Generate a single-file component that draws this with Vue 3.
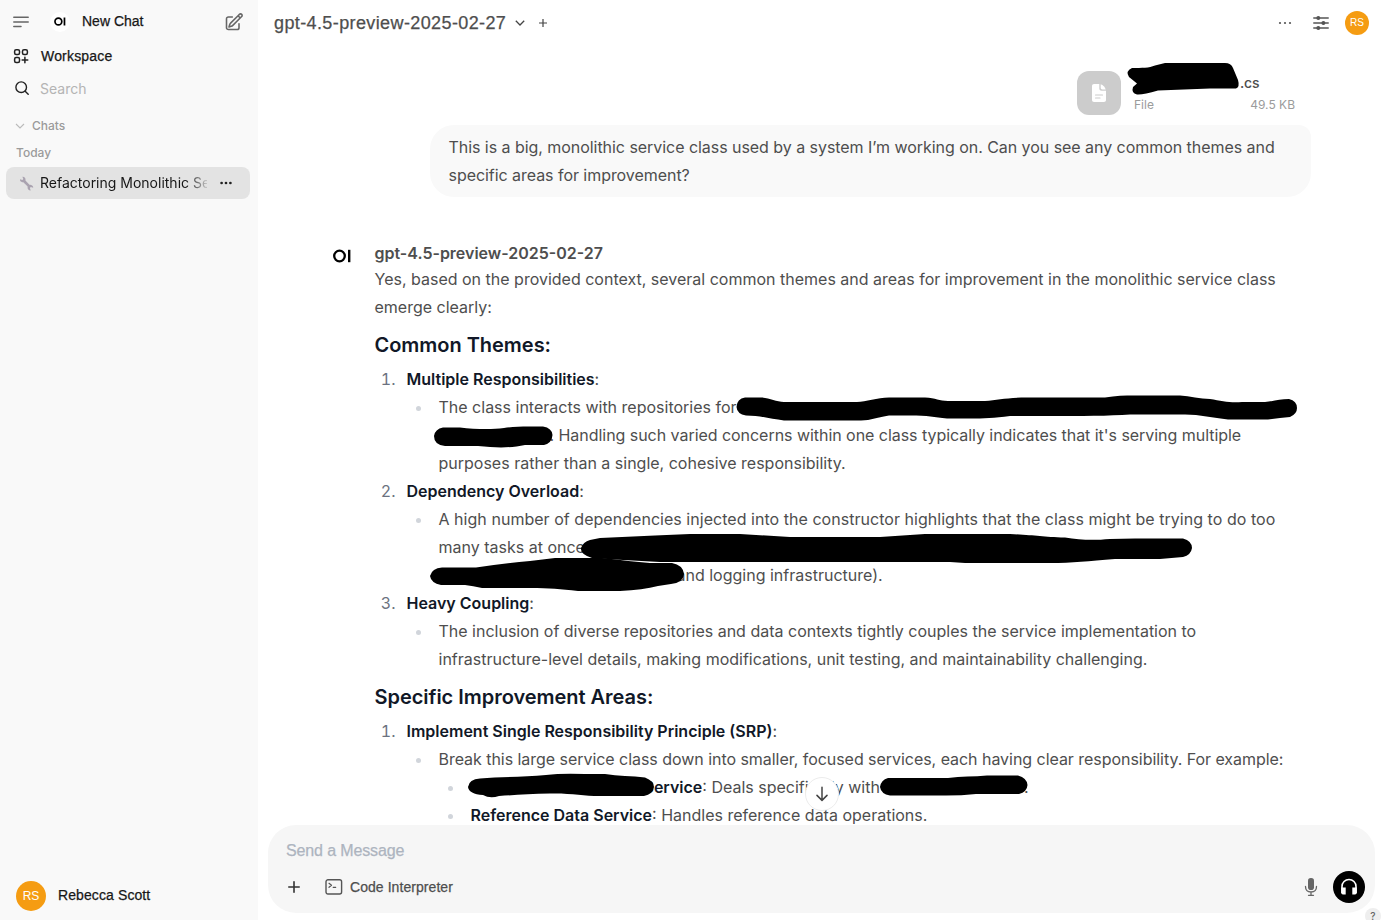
<script setup>
const themes = [
  {
    title: 'Multiple Responsibilities',
    lines: [
      { text: 'The class interacts with repositories for' },
      { gap: 111, tone: 'tight', text: '. Handling such varied concerns within one class typically indicates that it\'s serving multiple' },
      { text: 'purposes rather than a single, cohesive responsibility.' }
    ]
  },
  {
    title: 'Dependency Overload',
    lines: [
      { tone: 'wide', text: 'A high number of dependencies injected into the constructor highlights that the class might be trying to do too' },
      { text: 'many tasks at once' },
      { gap: 238, text: 'and logging infrastructure).' }
    ]
  },
  {
    title: 'Heavy Coupling',
    lines: [
      { text: 'The inclusion of diverse repositories and data contexts tightly couples the service implementation to' },
      { text: 'infrastructure-level details, making modifications, unit testing, and maintainability challenging.' }
    ]
  }
]
</script>

<template>
  <div class="app">
    <aside class="sidebar">
      <div class="top">
        <svg class="menu" width="16" height="12" viewBox="0 0 16 12" fill="none" stroke="#666" stroke-width="1.5" stroke-linecap="round"><path d="M.8 1.2h14.4M.8 6h14.4M.8 10.6h7.2" /></svg>
        <span class="logo"><svg width="12" height="9" viewBox="0 0 18 14"><circle cx="6.5" cy="7" r="5.3" fill="none" stroke="#000" stroke-width="2.6" /><path d="M14.6.8h2.7v12.4h-2.7z" /></svg></span>
        <span class="grot newchat">New Chat</span>
        <svg class="edit" width="20" height="20" viewBox="0 0 24 24" fill="none" stroke="#666" stroke-width="1.9" stroke-linecap="round" stroke-linejoin="round"><path d="m16.862 4.487 1.687-1.688a1.875 1.875 0 1 1 2.652 2.652L10.582 16.07a4.5 4.5 0 0 1-1.897 1.13L6 18l.8-2.685a4.5 4.5 0 0 1 1.13-1.897l8.932-8.931Zm0 0L19.5 7.125M18 14v4.75A2.25 2.25 0 0 1 15.75 21H5.25A2.25 2.25 0 0 1 3 18.75V8.25A2.25 2.25 0 0 1 5.25 6H10" /></svg>
      </div>
      <div class="work">
        <svg width="18" height="18" viewBox="0 0 24 24" fill="none" stroke="#222" stroke-width="2" stroke-linecap="round" stroke-linejoin="round"><rect x="3.5" y="3.5" width="6.5" height="6.5" rx="2" /><rect x="14" y="3.5" width="6.5" height="6.5" rx="2" /><rect x="3.5" y="14" width="6.5" height="6.5" rx="2" /><path d="M13.5 17.2h7.5M17.2 13.5V21" /></svg>
        <span class="grot">Workspace</span>
      </div>
      <div class="search">
        <svg width="14" height="14" viewBox="0 0 14 14" fill="none" stroke="#222" stroke-width="1.4" stroke-linecap="round"><circle cx="6.2" cy="6.2" r="5.3" /><path d="m10.2 10.2 3 3" /></svg>
        <span>Search</span>
      </div>
      <div class="chats">
        <svg width="10" height="6" viewBox="0 0 10 6" fill="none" stroke="#bbb" stroke-width="1.1"><path d="m1 1 4 4 4-4" /></svg>
        <span>Chats</span>
      </div>
      <div class="today">Today</div>
      <div class="item">
        <svg width="15" height="15" viewBox="0 0 15 15"><path d="m4.5 4.5 6.3 6.3" stroke="#aaa3b0" stroke-width="2.6" /><path d="M1 3.3 3.4 4l.9-.9L3.4.7c1.7-.3 3.5 1 3.1 3.3-.3 1.6-1.8 2.5-3.2 2.2C1.8 6 .7 4.7 1 3.3ZM14.2 11.7 11.8 11l-.9.9.8 2.5c-1.7.2-3.4-1.1-3.1-3.2.3-1.6 1.7-2.5 3.2-2.3 1.5.3 2.6 1.4 2.4 2.8Z" fill="#aaa3b0" /></svg>
        <span class="title">Refactoring Monolithic Se</span>
        <svg class="dots" width="12" height="4" viewBox="0 0 12 4" fill="#222"><circle cx="1.6" cy="2" r="1.35" /><circle cx="6" cy="2" r="1.35" /><circle cx="10.4" cy="2" r="1.35" /></svg>
      </div>
      <div class="user"><span class="avatar big">RS</span><span class="grot uname">Rebecca Scott</span></div>
    </aside>

    <main class="main">
      <header class="header">
        <span class="grot model">gpt-4.5-preview-2025-02-27</span>
        <svg class="chev" width="10" height="6" viewBox="0 0 10 6" fill="none" stroke="#444" stroke-width="1.3"><path d="m.8.8 4.2 4.2L9.2.8" /></svg>
        <svg class="plus" width="8" height="8" viewBox="0 0 8 8" stroke="#444" stroke-width="1.2"><path d="M4 0v8M0 4h8" /></svg>
        <svg class="more" width="14" height="4" viewBox="0 0 14 4" fill="#555"><circle cx="2" cy="2" r="1.1" /><circle cx="7" cy="2" r="1.1" /><circle cx="12" cy="2" r="1.1" /></svg>
        <svg class="sliders" width="16" height="16" viewBox="0 0 16 16" fill="#555" stroke="#555" stroke-width="1.5" stroke-linecap="round"><path d="M.8 3h3M7 3h8.2M.8 8h8M12 8h3.2M.8 13h3M7 13h8.2" /><circle cx="5.3" cy="3" r="1.25" /><circle cx="10.4" cy="8" r="1.25" /><circle cx="5.3" cy="13" r="1.25" /></svg>
        <span class="avatar small">RS</span>
      </header>

      <section class="file">
        <span class="ficon"><svg width="16" height="20" viewBox="0 0 16 20"><path d="M3 1h5.3v4.500c0 1.300 1 2.300 2.300 2.300H15V17c0 1.100-.9 2-2 2H3c-1.100 0-2-.9-2-2V3c0-1.100.9-2 2-2Z" fill="#fff" /><path d="M9.700 1.200c2.300.8 4.300 2.800 5 5.200h-3.300c-1 0-1.700-.7-1.700-1.700Z" fill="#fff" /><path d="M4.500 12h7M4.500 15h4.500" stroke="#ccc" stroke-width="1.200" stroke-linecap="round" /></svg></span>
        <div class="fmeta">
          <div class="fname">.cs</div>
          <div class="fsize"><span>File</span><span>49.5 KB</span></div>
        </div>
      </section>
      <section class="bubble">This is a big, monolithic service class used by a system I’m working on. Can you see any common themes and<br>specific areas for improvement?</section>

      <article class="reply">
        <svg class="rlogo" width="18" height="14" viewBox="0 0 18 14"><circle cx="6.500" cy="7" r="5.300" fill="none" stroke="#000" stroke-width="2.300" /><path d="M15 .8h2.400v12.400H15z" /></svg>
        <div class="rbody">
          <div class="rname">gpt-4.5-preview-2025-02-27</div>
          <p>Yes, based on the provided context, several common themes and areas for improvement in the monolithic service class<br>emerge clearly:</p>
          <h3>Common Themes:</h3>
          <div v-for="(t, i) in themes" :key="t.title" class="entry">
            <div class="num">{{ i + 1 }}.</div>
            <div>
              <div><b>{{ t.title }}</b>:</div>
              <div class="sub">
                <div v-for="(l, j) in t.lines" :key="j" :class="l.tone"><span v-if="l.gap" class="gap" :style="{ width: l.gap + 'px' }"></span>{{ l.text }}</div>
              </div>
            </div>
          </div>
          <h3>Specific Improvement Areas:</h3>
          <div class="entry">
            <div class="num">1.</div>
            <div>
              <div><b>Implement Single Responsibility Principle (SRP)</b>:</div>
              <div class="sub">
                <div class="tight">Break this large service class down into smaller, focused services, each having clear responsibility. For example:</div>
                <div class="sub"><span class="gap g3"></span><b>Service</b>: Deals specifically with<span class="gap g4"></span>.</div>
                <div class="sub"><b>Reference Data Service</b>: Handles reference data operations.</div>
              </div>
            </div>
          </div>
        </div>
      </article>

      <div class="composer">
        <div class="grot placeholder">Send a Message</div>
        <div class="tools">
          <svg width="12" height="12" viewBox="0 0 12 12" stroke="#333" stroke-width="1.6" stroke-linecap="round"><path d="M6 .8v10.4M.8 6h10.4" /></svg>
          <svg class="term" width="18" height="16" viewBox="0 0 18 16" fill="none" stroke="#555" stroke-width="1.4" stroke-linecap="round" stroke-linejoin="round"><rect x="1" y=".8" width="15.6" height="14.2" rx="2" /><path d="m4 4.300 2.500 2L4 8.300M8.200 8.300h2.500" stroke-width="1.2" /></svg>
          <span class="grot interp">Code Interpreter</span>
          <svg class="mic" width="14" height="20" viewBox="0 0 14 20"><rect x="4" y="1" width="6" height="12" rx="2.8" fill="#666" /><path d="M1.500 9.500c0 3.500 2.300 5.500 5.500 5.500s5.500-2 5.500-5.500M7 15v3M4.500 18.300h5" fill="none" stroke="#666" stroke-width="1.3" stroke-linecap="round" /></svg>
          <span class="call"><svg width="18" height="18" viewBox="0 0 18 18"><path d="M2 15V8.500a7 7 0 0 1 14 0V15" fill="none" stroke="#fff" stroke-width="1.6" /><path d="M1.200 9.500h4.500v7H3a1.800 1.800 0 0 1-1.800-1.800ZM16.800 9.500h-4.500v7H15a1.800 1.800 0 0 0 1.800-1.800Z" fill="#fff" /></svg></span>
        </div>
      </div>
    </main>

    <svg class="ink" width="1381" height="920" viewBox="0 0 1381 920">
      <path d="M1132 68C1142 68 1149 68 1155 65.500Q1160 64 1165 63H1225Q1231 63 1233 68L1238 80Q1240 87 1236 88.500H1210L1158 90.500Q1143 95 1137 94.500Q1131 93 1133 87L1137 83.500L1129 77Q1125 71 1132 68Z" />
      <path d="M745 397.500H761C770 398 776 402 784 402H857C866 402 877 397.500 889 397.500H925C936 398 939 401 948 401H985C998 400 1007 397.500 1027 397.500H1105C1120 395 1132 395.500 1145 395.500H1180C1190 396 1200 399 1210 399C1222 401 1230 403 1242 402H1265C1275 401 1280 399 1289 399Q1297 401 1297 408Q1297 414 1290 417Q1279 418 1268 419.500H1228C1213 418 1200 414.500 1185 414.500H1130C1110 416 1080 416 1050 416H1010C994 418 984 418.500 970 418.500H947C934 417 928 415.500 910 415.500H889C878 417 871 420.500 861 420.500H784C770 419 761 415.500 746 415.500Q737 414 736.500 407Q737 398.500 745 397.500Z" />
      <path d="M443 427.500H460C474 429 490 430 504 428C515 426 528 426.500 543 426.500Q552 428 552.500 435Q552 443 544 445H525C511 448 497 448 478 446H445Q434 445 434 436Q435 429 443 427.500Z" />
      <path d="M590 540L600 538L655 535.500L690 534H740L790 537H880L925 534H1010C1035 535 1041 537 1065 537.500C1080 540 1093 540.500 1110 539L1135 538.500H1183Q1192 541 1192 548Q1191 555 1183 557L1160 559H1115C1088 561 1073 563 1050 563H965L950 562H660L623 560L592 558Q580 554 581 548Q583 542 590 540Z" />
      <path d="M442 567.500H476Q505 563 530 561L555 558H602C623 560 635 562 650 563H672Q683 565 684 574Q683 583 671 584L658 586Q643 590 620 591H578C560 589 550 588 530 588H482Q473 586 465 585H441Q431 583 430 576Q432 568 442 567.500Z" />
      <path d="M480 778.500C500 777 525 777 546 775Q562 773 585 774H605C618 776 632 776 645 777.500Q654 781 654 787Q653 794 644 796H600C583 796 571 793 550 793.500C530 794 514 795 499 796Q490 799 483 795Q469 794 468 787Q469 779 480 778.500Z" />
      <path d="M888 778H948C961 776 974 777 987 775.500H1018Q1027 778 1027.500 785Q1027 792 1019 794H976Q958 796 938 795.500H890Q881 794 880 787Q881 780 888 778Z" />
    </svg>
    <div class="down"><svg width="12" height="16" viewBox="0 0 12 16" fill="none" stroke="#444" stroke-width="1.5" stroke-linecap="round" stroke-linejoin="round"><path d="M6 1.200v13M1 9.400l5 5 5-5" /></svg></div>
    <div class="help">?</div>
  </div>
</template>

<style>
html, body { overflow: hidden; background: #fff; }
</style>
<style scoped>
* { box-sizing: border-box; }
.app { position: relative; display: flex; width: 1381px; height: 920px; overflow: hidden; font-family: Inter, sans-serif; color: #4e4e4e; background: #fff; white-space: nowrap; }
svg { display: block; flex: none; }
.grot { font-family: "Liberation Sans", sans-serif; -webkit-text-stroke: .25px currentColor; }
.sidebar { width: 258px; flex: none; height: 920px; background: #f9f9f9; display: flex; flex-direction: column; color: #171717; font-size: 14px; }
.top { display: flex; align-items: center; height: 43px; margin-bottom: -1px; padding-left: 13px; }
.logo { width: 20px; height: 20px; margin-left: 21px; border-radius: 50%; background: #fff; display: flex; align-items: center; justify-content: center; }
.newchat { margin-left: 12px; width: 142px; padding-bottom: 2px; }
.work { display: flex; align-items: center; height: 27px; padding-left: 12px; }
.work span { margin-left: 11px; letter-spacing: .18px; }
.search { display: flex; align-items: center; height: 38px; padding-left: 15px; color: #b4b4b4; }
.search span { margin-left: 11px; }
.chats { display: flex; align-items: center; height: 35px; margin-top: 1px; padding-left: 15px; color: #9b9b9b; font-size: 12px; font-weight: 500; }
.chats span { margin-left: 7px; }
.today { height: 24px; line-height: 20px; padding-left: 16px; font-size: 12px; font-weight: 500; color: #9b9b9b; }
.item { display: flex; align-items: center; width: 244px; height: 32px; margin-left: 6px; padding-left: 13px; border-radius: 8px; background: #e3e3e3; }
.title { width: 167px; margin-left: 6px; padding-bottom: 2px; overflow: hidden; -webkit-mask-image: linear-gradient(to right, #000 88%, transparent 102%); }
.dots { margin-left: 13px; }
.user { display: flex; align-items: center; gap: 12px; margin: auto 0 9px 16px; }
.uname { padding-bottom: 2px; letter-spacing: .1px; }
.avatar { display: flex; align-items: center; justify-content: center; border-radius: 50%; background: #f59c12; color: #fff; font-family: "Liberation Sans", sans-serif; }
.big { width: 30px; height: 30px; font-size: 12px; }
.small { width: 24px; height: 24px; font-size: 10px; margin-left: 16px; padding-bottom: 1px; }
.main { width: 1123px; height: 920px; display: flex; flex-direction: column; }
.header { display: flex; align-items: center; height: 46px; flex: none; padding: 0 12px 0 16px; }
.model { font-size: 18px; width: 232px; letter-spacing: .39px; }
.chev { margin-left: 9px; }
.plus { margin-left: 14px; }
.more { margin-left: auto; }
.sliders { margin-left: 21px; }
.file { display: flex; height: 44px; margin: 25px 0 10px 819px; flex: none; }
.ficon { width: 44px; height: 44px; border-radius: 12px; background: #ccc; display: flex; align-items: center; justify-content: center; }
.fmeta { width: 161px; margin-left: 13px; }
.fname { padding-left: 106px; height: 24px; line-height: 24px; font-size: 14px; font-weight: 500; letter-spacing: -.2px; }
.fsize { display: flex; justify-content: space-between; height: 20px; line-height: 20px; font-size: 12px; color: #9b9b9b; }
.bubble { width: 881px; height: 72px; flex: none; margin-left: 171.5px; padding: 8px 19px; border-radius: 24px 12px 24px 24px; background: #f9f9f9; font-size: 16px; line-height: 28px; letter-spacing: -.047px; }
.reply { display: flex; height: 584px; overflow: hidden; margin-top: 44px; padding-left: 75px; flex: none; font-size: 16px; line-height: 28px; }
.rlogo { margin-top: 8px; }
.rbody { margin-left: 23.5px; }
.rname { height: 24px; line-height: 24px; font-weight: 600; }
p { margin: 0; }
h3 { margin: 0; height: 44px; padding-top: 10px; line-height: 28px; font-size: 20px; font-weight: 600; color: #111827; letter-spacing: -.03px; }
b { font-weight: 600; color: #111827; }
.entry { display: flex; }
.num { width: 21px; margin-right: 11px; text-align: right; color: #6b7280; font-variant-numeric: tabular-nums; }
.sub { position: relative; padding-left: 32px; }
.sub::before { content: ""; position: absolute; left: 9.5px; top: 12.5px; width: 5px; height: 5px; border-radius: 50%; background: #d1d5db; }
.tight { letter-spacing: -.042px; }
.wide { letter-spacing: .035px; }
.gap { display: inline-block; height: 1px; }
.g3 { width: 173px; }
.g4 { width: 144px; }
.composer { width: 1107px; height: 88px; margin-left: 10px; flex: none; padding: 14px 10px 0 18px; border-radius: 28px; background: #f6f6f6; }
.placeholder { font-size: 16px; line-height: 24px; color: #adb4bf; letter-spacing: -.13px; }
.tools { display: flex; align-items: center; height: 32px; margin-top: 8px; padding-left: 2px; font-size: 14px; }
.term { margin-left: 25px; }
.interp { margin-left: 7px; letter-spacing: .06px; }
.mic { margin-left: auto; }
.call { width: 32px; height: 32px; margin-left: 15px; border-radius: 50%; background: #000; display: flex; align-items: center; justify-content: center; }
.ink { position: absolute; left: 0; top: 0; pointer-events: none; }
.down { position: absolute; left: 805px; top: 777px; width: 34px; height: 34px; border-radius: 50%; border: 1px solid #ececec; background: #fff; display: flex; align-items: center; justify-content: center; }
.help { position: absolute; left: 1365px; top: 908px; width: 16px; height: 16px; border-radius: 50%; background: #eee; text-align: center; font-size: 10px; line-height: 17px; font-weight: 500; color: #666; }
</style>
